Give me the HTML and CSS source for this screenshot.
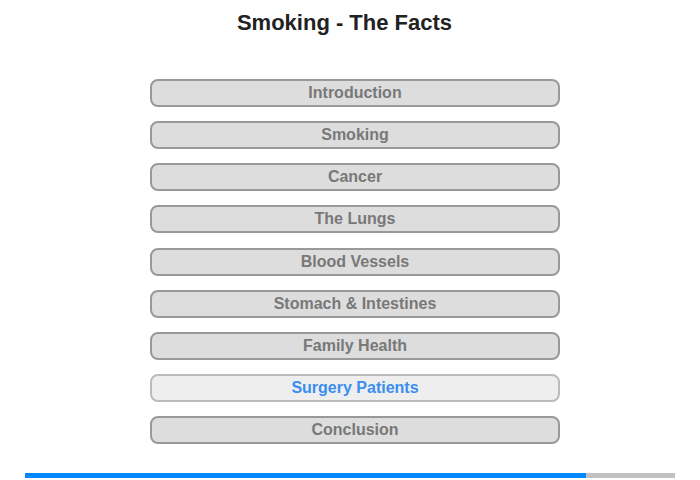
FILE: index.html
```html
<!DOCTYPE html>
<html>
<head>
<meta charset="utf-8">
<link rel="stylesheet" href="styles.css">
</head>
<body>
<div class="page">
  <h1 class="title">Smoking - The Facts</h1>
  <nav class="menu">
    <div class="item">Introduction</div>
    <div class="item">Smoking</div>
    <div class="item">Cancer</div>
    <div class="item">The Lungs</div>
    <div class="item">Blood Vessels</div>
    <div class="item">Stomach &amp; Intestines</div>
    <div class="item">Family Health</div>
    <div class="item active">Surgery Patients</div>
    <div class="item">Conclusion</div>
  </nav>
  <div class="progress"><div class="fill" style="width:561px"></div></div>
</div>
</body>
</html>
```
FILE: styles.css
```css
html, body {
  margin: 0;
  padding: 0;
  background: #fff;
  font-family: "Liberation Sans", Arial, sans-serif;
}
.page {
  width: 700px;
  height: 480px;
  padding-top: 10px;
  box-sizing: border-box;
}
.title {
  margin: 0;
  font-size: 22px;
  line-height: 26px;
  font-weight: bold;
  color: #222;
  text-align: center;
  padding-right: 11px;
}
.menu {
  margin: 43px 0 0 150px;
  width: 410px;
  display: flex;
  flex-direction: column;
  gap: 14.125px;
}
.item {
  box-sizing: border-box;
  height: 28px;
  border: 2px solid #999;
  border-radius: 8px;
  background: #ddd;
  color: #787878;
  font-weight: bold;
  font-size: 16px;
  line-height: 24px;
  text-align: center;
}
.item.active {
  background: #eee;
  border-color: #bbb;
  color: #3a8ef2;
}
.progress {
  margin: 29px 0 0 25px;
  width: 650px;
  height: 5px;
  background: #c1c1c1;
}
.fill {
  height: 5px;
  background: #0088ff;
}
```
